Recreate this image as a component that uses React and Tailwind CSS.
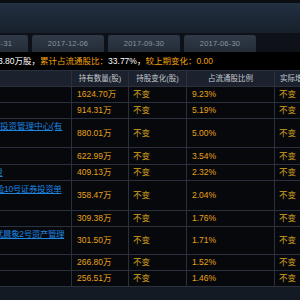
const TABS = ['2017-12-31', '2017-12-06', '2017-09-30', '2017-06-30'];

const ROWS = [
  { h: 'h-[16px]', qty: '1624.70万', pct: '9.23%' },
  { h: 'h-[16px]', qty: '914.31万', pct: '5.19%' },
  { h: 'h-[29px]', qty: '880.01万', pct: '5.00%', name: '投资管理中心(有', shift: 'ml-[0px]' },
  { h: 'h-[17px]', qty: '622.99万', pct: '3.54%' },
  { h: 'h-[16px]', qty: '409.13万', pct: '2.32%', tail: true },
  { h: 'h-[30px]', qty: '358.47万', pct: '2.04%', name: '盈10号证券投资单', shift: 'ml-[-4px]', tight: true },
  { h: 'h-[16px]', qty: '309.38万', pct: '1.76%' },
  { h: 'h-[28px]', qty: '301.50万', pct: '1.71%', name: '武晨象2号资产管理', shift: 'ml-[-5px]', tight: true },
  { h: 'h-[16px]', qty: '266.80万', pct: '1.52%' },
  { h: 'h-[16px]', qty: '256.51万', pct: '1.46%' },
];

const font = { fontFamily: '"Liberation Sans", "Noto Sans CJK SC", sans-serif' };

function Row({ row }) {
  return (
    <div className={`flex ${row.h} border-b border-[#2a313c] text-[8.5px] leading-none`}>
      <div className="w-[72px] shrink-0 border-r border-[#2a313c] overflow-hidden flex flex-col justify-center">
        {row.name && (
          <>
            <span className={`${row.shift} ${row.tight ? 'tracking-[-0.4px]' : ''} whitespace-nowrap text-[#1c86e0] underline leading-[13px]`}>{row.name}</span>
            <span className="leading-[13px]">&nbsp;</span>
          </>
        )}
        {row.tail && <span className="ml-[-6px] whitespace-nowrap text-[#1c86e0] underline">理</span>}
      </div>
      <div className="w-[57px] shrink-0 border-r border-[#2a313c] flex items-center pl-[5px] text-[#e8a21a]">{row.qty}</div>
      <div className="w-[58px] shrink-0 border-r border-[#2a313c] flex items-center pl-[4px] text-[#d9a520]">不变</div>
      <div className="w-[88px] shrink-0 border-r border-[#2a313c] flex items-center pl-[5px] text-[#e8a21a]">{row.pct}</div>
      <div className="flex-1 flex items-center pl-[4px] text-[#d9a520]">不变</div>
    </div>
  );
}

export default function App() {
  return (
    <div className="w-[300px] h-[300px] overflow-hidden bg-[#06080b] flex flex-col" style={font}>
      <div className="h-[3px] shrink-0 bg-[#0a0d12]" />
      <div className="h-[30px] shrink-0 bg-gradient-to-b from-[#233042] to-[#171f2b]" />
      <div className="h-[19px] shrink-0 bg-[#0e1218] flex items-end gap-[4px] ml-[-44px]">
        {TABS.map((t) => (
          <div key={t} className="w-[72px] h-[17px] shrink-0 rounded-t-[3px] bg-gradient-to-b from-[#303a48] to-[#242c38] flex items-center justify-center text-[7.5px] text-[#8a939f] tracking-[0.2px]">
            {t}
          </div>
        ))}
      </div>
      <div className="h-[18px] shrink-0 bg-black flex items-center whitespace-nowrap text-[8.5px] ml-[-2px]">
        <span className="text-white">3.80万股，</span>
        <span className="text-[#f0a010]">累计占流通股比：</span>
        <span className="text-white">33.77%，</span>
        <span className="text-[#f0a010]">较上期变化：0.00</span>
      </div>
      <div className="flex h-[17px] shrink-0 bg-[#1b222d] border-y border-[#2a313c] text-[7.5px] text-[#c3c8cf] whitespace-nowrap">
        <div className="w-[72px] shrink-0 border-r border-[#2a313c]" />
        <div className="w-[57px] shrink-0 border-r border-[#2a313c] flex items-center justify-center">持有数量(股)</div>
        <div className="w-[58px] shrink-0 border-r border-[#2a313c] flex items-center justify-center">持股变化(股)</div>
        <div className="w-[88px] shrink-0 border-r border-[#2a313c] flex items-center justify-center">占流通股比例</div>
        <div className="flex-1 flex items-center pl-[5px] overflow-hidden">实际增减持</div>
      </div>
      {ROWS.map((r, i) => (
        <Row key={i} row={r} />
      ))}
      <div className="flex-1 bg-[#141a23]" />
    </div>
  );
}
